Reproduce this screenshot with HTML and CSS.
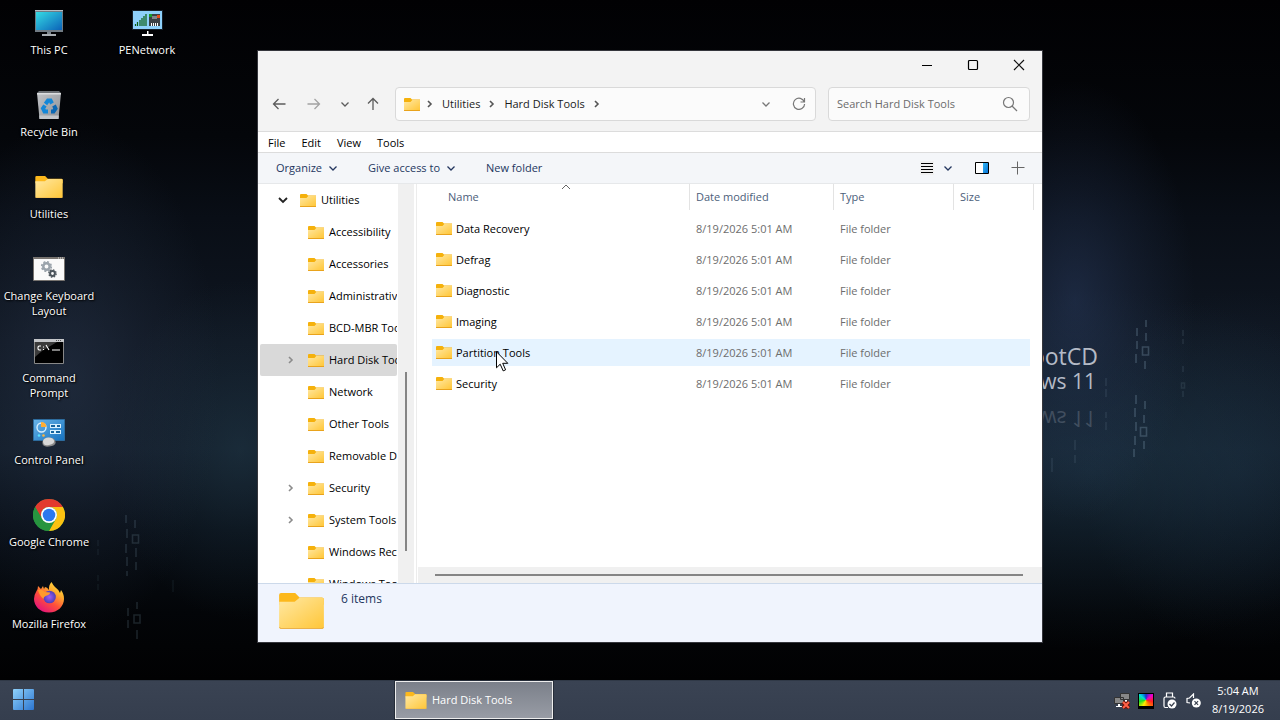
FILE: index.html
```html
<!DOCTYPE html>
<html lang="en">
<head>
<meta charset="utf-8">
<title>Hard Disk Tools</title>
<link rel="stylesheet" href="styles.css">
</head>
<body>
<svg class="defs" aria-hidden="true">
  <defs>
    <linearGradient id="fold" x1="0" y1="0" x2="1" y2="1"><stop offset="0" stop-color="#ffe8a3"/><stop offset="1" stop-color="#ffc637"/></linearGradient>
    <linearGradient id="screen" x1="0" y1="0" x2="1" y2="1"><stop offset="0" stop-color="#35dbe4"/><stop offset="1" stop-color="#0b62b8"/></linearGradient>
    <linearGradient id="bin" x1="0" y1="0" x2="1" y2="1"><stop offset="0" stop-color="#c2c4c8"/><stop offset="1" stop-color="#8d9095"/></linearGradient>
    <linearGradient id="panel" x1="0" y1="0" x2="1" y2="1"><stop offset="0" stop-color="#69b4e8"/><stop offset="1" stop-color="#1672c0"/></linearGradient>
    <linearGradient id="win" x1="0" y1="0" x2="1" y2="1"><stop offset="0" stop-color="#8fd2fb"/><stop offset="1" stop-color="#2c75d0"/></linearGradient>
    <linearGradient id="fire" x1="1" y1="0" x2="0.3" y2="1"><stop offset="0" stop-color="#fff44f"/><stop offset=".35" stop-color="#ffb02e"/><stop offset=".65" stop-color="#ff4f3a"/><stop offset="1" stop-color="#e5157a"/></linearGradient>
    <radialGradient id="globe"><stop offset="0" stop-color="#a05cf5"/><stop offset="1" stop-color="#4d3fb8"/></radialGradient>
    <linearGradient id="pane" x1="0" y1="0" x2="1" y2="1"><stop offset="0" stop-color="#33b6f2"/><stop offset="1" stop-color="#0873d8"/></linearGradient>
  </defs>
  <symbol id="folder" viewBox="0 0 16 13"><path fill="#f5b10c" d="M0 1a1 1 0 0 1 1-1h5.500l1.500 1.500h8V5H0z"/><path fill="url(#fold)" d="M0 4h6.500L8.300 2H16v10.200H0z"/><path fill="#e9a31c" d="M0 12h16v.4q0 .6-.6.6H.6Q0 13 0 12.400z"/></symbol>
  <symbol id="folder-big" viewBox="0 0 46 37"><path fill="#fcb81c" d="M0 2q0-2 2-2h14.500l4.500 4.500H44q2 0 2 2V12H0z"/><path fill="url(#fold)" d="M0 9h16l5-4h23q2 0 2 2v28q0 2-2 2H2q-2 0-2-2z"/><path fill="none" stroke="#e9b04a" d="M.500 35q0 1.500 1.500 1.500h42q1.500 0 1.500-1.500"/></symbol>
  <symbol id="down" viewBox="0 0 10 10"><path fill="none" stroke="currentColor" stroke-width="1.300" d="M1.500 3.500 5 7l3.500-3.500"/></symbol>
  <symbol id="right" viewBox="0 0 10 10"><path fill="none" stroke="currentColor" stroke-width="1.600" d="M3 2 6 5 3 8"/></symbol>
</svg>

<main class="desktop">
  <svg class="digits" viewBox="0 0 1280 680" preserveAspectRatio="none" aria-hidden="true">
    <g fill="none" stroke="#8fb0c4" stroke-width="1.600">
      <g opacity=".28"><path d="M1137 328v8M1137 341v8M1136 354v9M1146 320v7M1146 333v8M1145 361v8M1142.500 347h6v8h-6zM1136 395v9M1135 408v9M1136 422v9M1135 436v9M1134 449v8M1145 401v8M1144 415v8M1144 441v8M1140.500 427.500h6v8.500h-6z"/></g>
      <g opacity=".13"><path d="M1183 330v6M1183 339v5M1183 366v6M1181.500 383h3v5h-3zM1183 391v6M1106 378v8M1106 389v8M1106 412v6M1106 422v8M1075 440v10M1052 458v14M1075 455v8"/></g>
      <g opacity=".18"><path d="M126 515v8M127 529v9M126 544v9M127 557v9M127 571v5M135 520v8M136 548v9M136 562v8M132.500 535h6v8h-6zM137 602v7M128 608v8M128 620v8M134 615h6v8h-6zM137 630v9"/></g>
      <g opacity=".08"><path d="M98 540v6M98 549v6M98 575v6M98 584v6M173 580v12"/></g>
    </g>
  </svg>
  <div class="brand"><p class="brand-top">BootCD</p><p class="brand-sub">Windows 11</p><p class="brand-sub brand-mirror" aria-hidden="true">Windows 11</p></div>

  <nav class="icons" aria-label="Desktop">
    <a href="#" class="shortcut"><span class="pic"><svg width="28" height="28" viewBox="0 0 28 28"><path fill="#707b84" d="M0 1h28v22H0z"/><path fill="#b6bec4" d="M0 1h28v1H0z"/><path fill="url(#screen)" d="M1 3h26v18H1z"/><path fill="#7b838a" d="M12 23h4v2h-4z"/><path fill="#a8adb2" d="M7 25h14v2H7z"/></svg></span>This PC</a>
    <a href="#" class="shortcut"><span class="pic"><svg width="28" height="28" viewBox="0 0 28 28"><path fill="#6c7075" d="M4 0h20l2 2H2z"/><path fill="url(#bin)" d="M2 2h24l-2.500 26h-19z"/><path fill="#dcdee0" d="M2 2h24v1.500H2z"/><path fill="#c3c6ca" d="M4.200 24.500h19.600l-.3 3.500h-19z"/><g fill="none" stroke="#1487d8" stroke-width="4"><path d="m10.500 13 2.500-3.500h2.500l1.500 3"/><path d="m19 14.500 1.500 3-2 3H16" stroke="#0a67b4"/><path d="M13 20.500H9.500l-1.500-3 2-3"/></g></svg></span>Recycle Bin</a>
    <a href="#" class="shortcut"><span class="pic"><svg width="28" height="22"><use href="#folder-big"/></svg></span>Utilities</a>
    <a href="#" class="shortcut"><span class="pic"><svg width="32" height="24" viewBox="0 0 32 24"><path fill="#fafafa" stroke="#77736f" d="M.5.5h31v23H.500z"/><path fill="#77736f" d="M0 0h32v2H0z"/><path stroke="#ddd" stroke-dasharray="1 1" d="M25 1h6"/><circle cx="13.500" cy="9.500" r="3.200" fill="none" stroke="#9aa3ab" stroke-width="2.500"/><circle cx="13.500" cy="9.500" r="4.800" fill="none" stroke="#9aa3ab" stroke-width="1.600" stroke-dasharray="2 1.770"/><circle cx="19.500" cy="16.500" r="2.400" fill="none" stroke="#4c555c" stroke-width="2"/><circle cx="19.500" cy="16.500" r="3.700" fill="none" stroke="#4c555c" stroke-width="1.300" stroke-dasharray="1.500 1.400"/></svg></span>Change Keyboard Layout</a>
    <a href="#" class="shortcut"><span class="pic"><svg width="30" height="25" viewBox="0 0 30 25"><path fill="#000" stroke="#888" d="M.5.5h29v24H.500z"/><path fill="#3b3b3b" d="M1 3h22L8 12l-7 6z"/><path fill="#c4c6c9" d="M0 0h30v3H0z"/><path stroke="#555" stroke-dasharray="1 1" d="M22 1.500h6"/><g fill="none" stroke="#fff" stroke-width="1.100"><path d="M7 7H5L4 8v2l1 1h2M9.500 7.500v1M9.500 10v1M12 6l3 5M18 11h8"/></g></svg></span>Command<br>Prompt</a>
    <a href="#" class="shortcut"><span class="pic"><svg width="32" height="28" viewBox="0 0 32 28"><path fill="url(#panel)" stroke="#2d6c9e" d="M.5.5h31v21H.500z"/><circle cx="8.500" cy="8.500" r="4.500" fill="none" stroke="#d7efff" stroke-width="1.400"/><path fill="#ffad33" d="M8 8V3q5 0 5.500 5z"/><g fill="#d9f1ff"><path d="M17 5h11v4H17zM17 11h11v4H17z"/></g><path fill="#15649f" d="M18 6h4v2h-4zM24 6h3v2h-3zM18 12h3v2h-3zM23 12h4v2h-4z"/><circle cx="6" cy="16.500" r="1.300" fill="#5ce0ff"/><circle cx="10.500" cy="16.500" r="1.300" fill="#ffb43b"/><path fill="#888" d="M9.500 22.500q1-4 6.500-4t6.500 4-6.500 5-6.500-5z"/><path fill="#d8d8d8" d="M10 22q1-3.500 5.500-3.500T21 21.500t-5 4.500-6-4z"/></svg></span>Control Panel</a>
    <a href="#" class="shortcut"><span class="pic"><svg width="32" height="32" viewBox="0 0 32 32"><circle cx="16" cy="16" r="16" fill="#27943f"/><path fill="#e23a2e" d="M2.140 8A16 16 0 0 1 29.860 8H16a8 8 0 0 0-6.900 12z"/><path fill="#fcc212" d="M29.860 8A16 16 0 0 1 16 32l6.930-12A8 8 0 0 0 16 8z"/><path fill="#27943f" d="m2.140 8 6.930 12A8 8 0 0 0 20 22.900L16 32A16 16 0 0 1 2.140 8z"/><circle cx="16" cy="16" r="8" fill="#fff"/><circle cx="16" cy="16" r="6.300" fill="#2b78ee"/></svg></span>Google Chrome</a>
    <a href="#" class="shortcut"><span class="pic"><svg width="32" height="32" viewBox="0 0 32 32"><path fill="url(#fire)" d="M18.500 1q-3 3-2.500 8-2-3-4-3l-1 2-1-3-2 3-3-3q0 3-1.500 5Q1 14 1 18c0 7 6 13.500 15 13.500S31 25 31 18c0-4-1-6-3-9l-1 3q-2-4-5-6-2-2-3.500-5z"/><circle cx="16.500" cy="16" r="6.300" fill="url(#globe)"/><path fill="#ff9a2c" d="M5 9q4-1 7 2l5 .5q.5 2-4.500 3.500-2 1-2 3-4-3-5.500-9z"/></svg></span>Mozilla Firefox</a>
    <a href="#" class="shortcut"><span class="pic"><svg width="31" height="28" viewBox="0 0 31 28"><path fill="#8ed0fb" stroke="#16202a" d="M.5 1.500h30v19H.500z"/><path stroke="#0a5d12" stroke-width="1.200" d="M3.500 17v-2M5.500 17v-4M8 17v-6M10 17V9M12 17V7M14 17V5"/><path fill="#3b4045" d="M17 5h11v12H17z"/><path fill="#80868b" d="M20 7h5v3h-5z"/><path fill="#1a9c2b" d="M17 5h3v3h-3z"/><path fill="#e64a19" d="M25 6h3v3h-3z"/><path stroke="#fff" stroke-dasharray="1 1" stroke-width="3" d="M19 15.500h8"/><path fill="#fff" d="M15 22h1.500v3H21v2H10v-2h5z"/></svg></span>PENetwork</a>
  </nav>

  <section class="window" aria-label="Hard Disk Tools">
    <header class="titlebar">
      <button aria-label="Minimize"><svg width="12" height="12"><path stroke="#000" d="M1 6.500h10"/></svg></button>
      <button aria-label="Maximize"><svg width="12" height="12"><rect x="1.500" y="1.500" width="9" height="9" rx="1" fill="none" stroke="#000" stroke-width="1.200"/></svg></button>
      <button aria-label="Close"><svg width="12" height="12"><path stroke="#111" stroke-width="1.200" d="m1 1 10 10M11 1 1 11"/></svg></button>
    </header>
    <div class="navbar">
      <div class="nav-buttons">
        <button aria-label="Back"><svg width="14" height="14"><path fill="none" stroke="#5c5c5c" stroke-width="1.300" d="M13.500 7H1.500M6.500 2l-5 5 5 5"/></svg></button>
        <button aria-label="Forward"><svg width="14" height="14"><path fill="none" stroke="#a3a3a3" stroke-width="1.300" d="M.5 7h12M7.500 2l5 5-5 5"/></svg></button>
        <button class="slim" aria-label="Recent locations"><svg width="10" height="10"><use href="#down"/></svg></button>
        <button class="slim" aria-label="Up"><svg width="12" height="14"><path fill="none" stroke="#5c5c5c" stroke-width="1.300" d="M6 13V1.500M1 6.500l5-5 5 5"/></svg></button>
      </div>
      <div class="address">
        <svg width="16" height="13"><use href="#folder"/></svg>
        <svg class="crumb-arrow" width="10" height="10"><use href="#right"/></svg>
        <a href="#">Utilities</a>
        <svg class="crumb-arrow" width="10" height="10"><use href="#right"/></svg>
        <a href="#">Hard Disk Tools</a>
        <svg class="crumb-arrow" width="10" height="10"><use href="#right"/></svg>
        <span class="grow"></span>
        <button aria-label="Previous locations"><svg width="10" height="10"><use href="#down"/></svg></button>
        <button aria-label="Refresh"><svg width="14" height="14"><path fill="none" stroke="#777" stroke-width="1.200" d="M12.300 5A5.600 5.600 0 1 0 12.600 7M12.500 1v4H8.500"/></svg></button>
      </div>
      <label class="search"><input type="search" placeholder="Search Hard Disk Tools" aria-label="Search Hard Disk Tools"><svg width="16" height="16"><circle cx="6.500" cy="6.500" r="5" fill="none" stroke="#777" stroke-width="1.200"/><path stroke="#777" stroke-width="1.300" d="m10 10 5 5"/></svg></label>
    </div>
    <nav class="menubar"><button>File</button><button>Edit</button><button>View</button><button>Tools</button></nav>
    <div class="toolbar">
      <button>Organize<svg width="10" height="10"><use href="#down"/></svg></button>
      <button>Give access to<svg width="10" height="10"><use href="#down"/></svg></button>
      <button>New folder</button>
      <span class="grow"></span>
      <div class="view-tools">
        <div class="view-split">
          <button class="list-mode" aria-label="View"><svg width="12" height="12"><path stroke="#000" d="M0 1.500h12M0 4.500h12M0 7.500h12M0 10.500h12"/></svg></button>
          <button aria-label="More view options"><svg width="10" height="10"><use href="#down"/></svg></button>
        </div>
        <button aria-label="Preview pane"><svg width="14" height="12"><path fill="#fff" stroke="#000" d="M.5.5h13v11H.500z"/><path fill="url(#pane)" d="M8 1h5v10H8z"/></svg></button>
        <button aria-label="Add"><svg width="14" height="14"><path stroke="#666" d="M.5 6.500h13M6.500.5v13"/></svg></button>
      </div>
    </div>
    <div class="content">
      <div class="side">
        <ul class="tree">
          <li class="root"><svg class="toggle" width="10" height="10"><path fill="none" stroke="#222" stroke-width="1.800" d="M1 3l4 4 4-4"/></svg><svg width="16" height="13"><use href="#folder"/></svg>Utilities</li>
          <li><svg width="16" height="13"><use href="#folder"/></svg>Accessibility</li>
          <li><svg width="16" height="13"><use href="#folder"/></svg>Accessories</li>
          <li><svg width="16" height="13"><use href="#folder"/></svg>Administrative</li>
          <li><svg width="16" height="13"><use href="#folder"/></svg>BCD-MBR Tools</li>
          <li class="current"><svg class="toggle" width="10" height="10"><use href="#right"/></svg><svg width="16" height="13"><use href="#folder"/></svg>Hard Disk Tools</li>
          <li><svg width="16" height="13"><use href="#folder"/></svg>Network</li>
          <li><svg width="16" height="13"><use href="#folder"/></svg>Other Tools</li>
          <li><svg width="16" height="13"><use href="#folder"/></svg>Removable Drive</li>
          <li><svg class="toggle" width="10" height="10"><use href="#right"/></svg><svg width="16" height="13"><use href="#folder"/></svg>Security</li>
          <li><svg class="toggle" width="10" height="10"><use href="#right"/></svg><svg width="16" height="13"><use href="#folder"/></svg>System Tools</li>
          <li><svg width="16" height="13"><use href="#folder"/></svg>Windows Recovery</li>
          <li><svg width="16" height="13"><use href="#folder"/></svg>Windows Tools</li>
        </ul>
        <div class="vscroll"><div class="vthumb"></div></div>
      </div>
      <div class="listing">
        <div class="list-body">
          <svg class="sort" width="10" height="6"><path fill="none" stroke="#666" d="m1 5 4-4 4 4"/></svg>
          <table>
            <colgroup><col><col class="c-date"><col class="c-type"><col class="c-size"></colgroup>
            <thead><tr><th>Name</th><th>Date modified</th><th>Type</th><th>Size</th></tr></thead>
            <tbody>
              <tr><td><svg width="16" height="13"><use href="#folder"/></svg>Data Recovery</td><td>8/19/2026 5:01 AM</td><td>File folder</td><td></td></tr>
              <tr><td><svg width="16" height="13"><use href="#folder"/></svg>Defrag</td><td>8/19/2026 5:01 AM</td><td>File folder</td><td></td></tr>
              <tr><td><svg width="16" height="13"><use href="#folder"/></svg>Diagnostic</td><td>8/19/2026 5:01 AM</td><td>File folder</td><td></td></tr>
              <tr><td><svg width="16" height="13"><use href="#folder"/></svg>Imaging</td><td>8/19/2026 5:01 AM</td><td>File folder</td><td></td></tr>
              <tr class="hover"><td><svg width="16" height="13"><use href="#folder"/></svg>Partition Tools</td><td>8/19/2026 5:01 AM</td><td>File folder</td><td></td></tr>
              <tr><td><svg width="16" height="13"><use href="#folder"/></svg>Security</td><td>8/19/2026 5:01 AM</td><td>File folder</td><td></td></tr>
            </tbody>
          </table>
        </div>
        <div class="hscroll"><div class="hthumb"></div></div>
      </div>
    </div>
    <footer class="status"><svg width="45" height="36"><use href="#folder-big"/></svg><span>6 items</span></footer>
  </section>
  <svg class="cursor" width="13" height="21" viewBox="0 0 13 21" aria-hidden="true"><path fill="#fff" stroke="#000" d="M.5.8v16l3.700-3.600 3 6.700 2.400-1.100-2.900-6.500h5.100z"/></svg>
</main>

<footer class="taskbar">
  <button class="start" aria-label="Start"><svg width="21" height="21" viewBox="0 0 21 21"><path fill="url(#win)" d="M0 1q0-1 1-1h9v10H0zM11 0h9q1 0 1 1v9H11zM0 11h10v10H1q-1 0-1-1zM11 11h10v9q0 1-1 1h-9z"/></svg></button>
  <div class="tasks"><button class="task"><svg width="22" height="17"><use href="#folder-big"/></svg>Hard Disk Tools</button></div>
  <div class="tray">
    <button aria-label="Network disconnected"><svg width="16" height="16"><path fill="#878787" stroke="#333" d="M6.500.5h9v6h-9zM.500 4.500h9v6h-9z"/><path fill="#fff" d="M4 11h2v2h2v1H2v-1h2zM11 7h2v2h-2z"/><path stroke="#6c130a" stroke-width="4" d="m9 9 6 6M15 9l-6 6"/><path stroke="#ff6248" stroke-width="2" d="m9 9 6 6M15 9l-6 6"/></svg></button>
    <button aria-label="Display"><span class="spectrum"></span></button>
    <button aria-label="Eject media"><svg width="14" height="17"><g fill="none" stroke="#fff" stroke-width="1.200"><path d="M3.500 5V1h6v4M5 15.500H2.500q-1.500 0-1.500-1.500V6.500Q1 5 2.500 5h8q1.500 0 1.500 1.500"/></g><circle cx="9" cy="12" r="4.500" fill="#fff"/><path fill="none" stroke="#3a4250" stroke-width="1.200" d="m6.500 12 2 2 3-3.500"/></svg></button>
    <button aria-label="Volume muted"><svg width="15" height="15"><path fill="none" stroke="#fff" stroke-width="1.200" d="M4 10 1 9.500v-4l2.500-.5L7.500 1v4"/><circle cx="10.300" cy="10" r="4.500" fill="#fff"/><path stroke="#3a4250" stroke-width="1.200" d="m8.500 8.200 3.600 3.600M12.100 8.200l-3.600 3.600"/></svg></button>
    <div class="clock"><time>5:04 AM</time><time>8/19/2026</time></div>
  </div>
</footer>
</body>
</html>
```
FILE: styles.css
```css
* { box-sizing: border-box; }
html, body { height: 100%; }
body {
  margin: 0;
  display: flex;
  flex-direction: column;
  overflow: hidden;
  background: #020306;
  font: 11px/16px "Open Sans", "Noto Sans", sans-serif;
  color: #111;
}
button {
  display: flex;
  align-items: center;
  justify-content: center;
  margin: 0;
  padding: 0;
  border: 0;
  background: none;
  font: inherit;
  color: inherit;
}
a { color: inherit; text-decoration: none; }
svg { display: block; flex: none; }
.defs { position: absolute; width: 0; height: 0; }
.grow { flex: 1; }

/* Desktop and wallpaper */
.desktop {
  position: relative;
  flex: 1;
  min-height: 0;
  background:
    radial-gradient(ellipse 120px 220px at 1075px 300px, rgba(46, 66, 106, .45), rgba(46, 66, 106, .2) 50%, transparent),
    radial-gradient(ellipse 300px 180px at 1090px 470px, rgba(34, 62, 80, .45), rgba(34, 62, 80, .2) 50%, transparent),
    radial-gradient(ellipse 160px 180px at 1240px 470px, rgba(30, 52, 72, .4), transparent),
    radial-gradient(ellipse 150px 260px at 70px 380px, rgba(46, 60, 84, .45), rgba(46, 60, 84, .2) 50%, transparent),
    radial-gradient(ellipse 130px 170px at 240px 450px, rgba(36, 62, 78, .45), rgba(36, 62, 78, .2) 50%, transparent),
    linear-gradient(#010103 0%, #04060a 20%, #090e16 32%, #0f1621 50%, #111b27 66%, #080e16 78%, #030508 90%, #010102 100%);
}
.digits { position: absolute; inset: 0; width: 100%; height: 100%; }
.brand {
  position: absolute;
  top: 343px;
  right: 182px;
  color: #b4bac6;
  text-align: right;
}
.brand p { margin: 0; }
.brand-top { font-size: 23px; line-height: 26px; }
.brand-sub { padding-right: 2px; font-size: 21px; line-height: 24px; }
.brand .brand-mirror { margin-top: 14px; transform: scaleY(-1); opacity: .25; }

.icons {
  display: grid;
  grid-template-rows: repeat(8, 82px);
  grid-auto-columns: 98px;
  grid-auto-flow: column;
  width: max-content;
  padding-top: 7px;
}
.shortcut {
  position: relative;
  color: #fff;
  text-align: center;
  line-height: 15px;
  text-shadow: 1px 1px 2px #000, 0 0 2px #000;
}
.pic {
  display: flex;
  align-items: center;
  justify-content: center;
  height: 32px;
  margin-bottom: 3px;
}

/* Explorer window */
.window {
  position: absolute;
  inset: 50px 237px 37px 257px;
  display: flex;
  flex-direction: column;
  border: 1px solid #35363c;
  background: #fff;
}
.titlebar {
  display: flex;
  justify-content: flex-end;
  height: 36px;
  padding-bottom: 8px;
  background: #f3f3f3;
}
.titlebar button { width: 46px; }
.navbar {
  display: flex;
  padding: 0 12px 10px 3px;
  background: #f3f3f3;
  border-bottom: 1px solid #dcdcdc;
}
.nav-buttons { display: flex; width: 134px; color: #5c5c5c; }
.nav-buttons button { width: 35px; }
.nav-buttons .slim { width: 28px; }
.address, .search {
  display: flex;
  align-items: center;
  height: 34px;
  border: 1px solid #d9d9d9;
  border-radius: 4px;
  background: #fbfbfb;
}
.address { flex: 1; padding-left: 8px; color: #1a1a1a; }
.crumb-arrow { margin: 0 7px 0 5px; color: #555; }
.address a + .crumb-arrow { margin-left: 7px; }
.address button { width: 33px; height: 100%; color: #777; }
.search { width: 202px; margin-left: 12px; padding: 0 11px 0 8px; }
.search input {
  flex: 1;
  min-width: 0;
  padding: 0;
  border: 0;
  outline: 0;
  background: none;
  font: inherit;
}
.search input::placeholder { color: #6b6b6b; opacity: 1; }
.menubar {
  display: flex;
  gap: 16px;
  height: 21px;
  padding: 1px 0 0 10px;
  border-bottom: 1px solid #dcdcdc;
  color: #000;
}
.toolbar {
  display: flex;
  gap: 30px;
  height: 31px;
  padding: 0 17px 0 18px;
  background: #f4f6f9;
  border-bottom: 1px solid #e6e8ea;
  color: #24375f;
}
.toolbar > button { gap: 6px; }
.view-tools { display: flex; align-items: center; gap: 22px; }
.view-split { display: flex; gap: 9px; }
.list-mode { padding: 1px; background: #f0f0f0; }

.content { display: flex; flex: 1; min-height: 0; }
.side { display: flex; width: 159px; padding-right: 2px; border-right: 1px solid #ececec; overflow: hidden; }
.tree { flex: 1; min-width: 0; margin: 0; padding: 0 1px 0 2px; list-style: none; overflow: hidden; color: #000; }
.tree li {
  display: flex;
  align-items: center;
  gap: 5px;
  height: 32px;
  padding-left: 48px;
  overflow: hidden;
  white-space: nowrap;
}
.tree li:has(.toggle) { padding-left: 26px; }
.tree .root.root { padding-left: 18px; }
.toggle { margin-right: 7px; color: #8c8c8c; }
.tree .current { background: #d9d9d9; border-radius: 2px; }
.vscroll { width: 16px; padding: 188px 7px 32px; background: #f0f0f0; }
.vthumb { height: 100%; background: #858585; }
.listing { display: flex; flex: 1; flex-direction: column; min-width: 0; padding-left: 1px; }
.list-body { position: relative; flex: 1; padding: 0 8px 0 14px; }
.sort { position: absolute; left: 143px; top: 0; }
table { width: 100%; border-collapse: separate; border-spacing: 0; table-layout: fixed; }
.c-date { width: 144px; }
.c-type { width: 120px; }
.c-size { width: 80px; }
th {
  height: 31px;
  padding: 5px 6px 10px;
  background: linear-gradient(#e3e3e3, #e3e3e3) right top / 1px 26px no-repeat;
  color: #4c607a;
  font-weight: 400;
  text-align: left;
}
th:first-child { padding-left: 16px; }
td {
  height: 31px;
  padding: 0 6px;
  border-bottom: 4px solid transparent;
  background-clip: padding-box;
  color: #6d6d6d;
  white-space: nowrap;
}
td:first-child { padding-left: 4px; color: #000; }
td:last-child { border-right: 4px solid transparent; }
td svg { display: inline-block; margin-right: 4px; vertical-align: -2px; }
.hover td { background-color: #e5f3ff; }
.hscroll { height: 16px; padding: 7px 19px 7px 17px; background: #f0f0f0; }
.hthumb { height: 2px; background: #858585; }
.status {
  display: flex;
  gap: 17px;
  height: 59px;
  padding: 9px 21px;
  border-top: 1px solid #ccd9ea;
  background: #f0f4fd;
  color: #24375f;
  font-size: 12px;
}
.status span { line-height: 12px; }
.cursor { position: absolute; left: 496px; top: 351px; }

/* Taskbar */
.taskbar {
  display: flex;
  height: 40px;
  border-top: 1px solid #303947;
  background: linear-gradient(#3a4353, #353e4e);
  color: #fff;
}
.start { width: 47px; padding-bottom: 2px; }
.tasks { flex: 1; padding-left: 348px; }
.task {
  gap: 5px;
  justify-content: flex-start;
  width: 158px;
  height: 38px;
  padding-left: 9px;
  border: 1px solid #eee;
  outline: 1px solid #252c38;
  background: linear-gradient(#7b808a, #989ca5);
}
.tray { display: flex; padding-right: 16px; }
.tray button { width: 24px; }
.spectrum {
  width: 16px;
  height: 16px;
  border: 1px solid #000;
  border-bottom-width: 3px;
  background: conic-gradient(#13c, #e0c, #f22, #f80, #fe0, #2d2, #0dd, #13c);
}
.clock {
  display: flex;
  flex-direction: column;
  align-items: center;
  margin-left: 6px;
  padding-top: 1px;
  line-height: 18px;
}
```
